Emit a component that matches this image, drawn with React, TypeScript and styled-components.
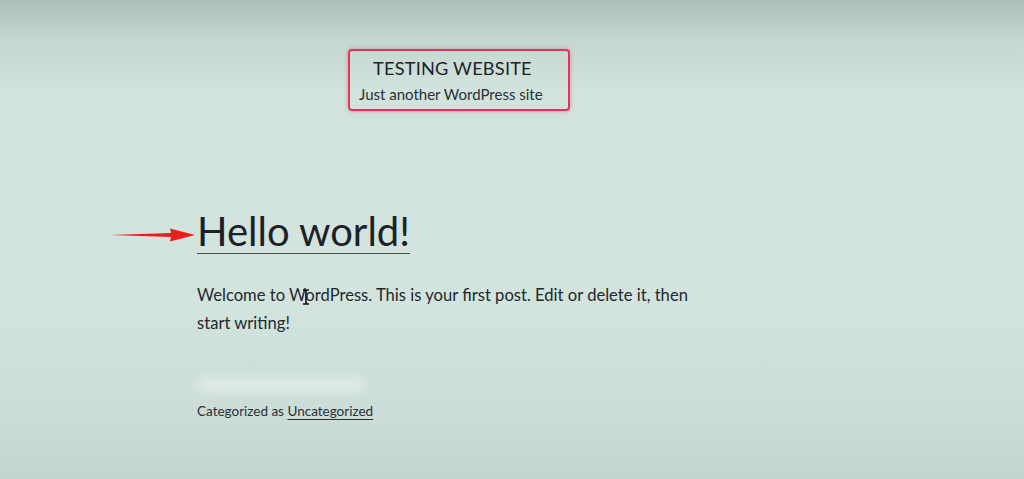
import styled, { createGlobalStyle } from "styled-components";

const GlobalStyle = createGlobalStyle`
  html, body {
    margin: 0;
    padding: 0;
  }
  body {
    font-family: Lato, "Noto Sans", sans-serif;
    color: #28303d;
  }
`;

const Page = styled.div`
  position: relative;
  width: 1024px;
  height: 479px;
  overflow: hidden;
  background: linear-gradient(
    180deg,
    #acbfb7 0px,
    #c4d7d0 40px,
    #d1e3dc 90px,
    #d2e4dd 300px,
    #cbddd6 420px,
    #c2d4cc 479px
  );
  display: flex;
  flex-direction: column;
`;

const Header = styled.header`
  padding: 49px 0 0 348px;
`;

const Branding = styled.div`
  width: 209px;
  height: 58px;
  border: 2px solid #e5335f;
  border-radius: 4px;
  box-shadow: 0 0 4px rgba(229, 51, 95, 0.45);
  display: flex;
  flex-direction: column;
  padding-left: 9px;
  box-sizing: content-box;
`;

const SiteTitle = styled.div`
  margin: 5px 0 0 14px;
  font-size: 18.2px;
  line-height: 24px;
  letter-spacing: 0.2px;
  color: #1d2228;
`;

const Tagline = styled.div`
  margin-top: 5px;
  font-size: 15px;
  line-height: 18px;
  color: #2a3037;
`;

const Entry = styled.article`
  padding: 96px 0 0 197px;
  display: flex;
  flex-direction: column;
  align-items: flex-start;
`;

const TitleRow = styled.div`
  position: relative;
`;

const Pointer = styled.svg`
  position: absolute;
  left: -88px;
  top: 19px;
`;

const EntryTitle = styled.h1`
  margin: 0;
  font-size: 40px;
  line-height: 48px;
  font-weight: 400;
  color: #1c2127;
  text-decoration: underline;
  text-decoration-thickness: 1px;
  text-underline-offset: 7px;
  text-decoration-color: #4a5058;
`;

const Content = styled.p`
  margin: 26px 0 0;
  width: 510px;
  font-size: 16.6px;
  line-height: 28px;
  color: #22282f;
`;

const Meta = styled.div`
  margin-top: 41px;
  display: flex;
  flex-direction: column;
  gap: 10px;
  font-size: 13.5px;
  line-height: 18px;
  color: #2a3037;
`;

const Blurred = styled.span`
  display: inline-block;
  width: 168px;
  height: 14px;
  border-radius: 7px;
  background: #e6eeeb;
  filter: blur(4px);
  opacity: 0.8;
`;

const TermLink = styled.a`
  color: inherit;
  text-decoration: underline;
  text-underline-offset: 3px;
`;

const Cursor = styled.svg`
  position: absolute;
  left: 301px;
  top: 289px;
`;

export default function App() {
  return (
    <>
      <GlobalStyle />
      <Page>
        <Header>
          <Branding>
            <SiteTitle>TESTING WEBSITE</SiteTitle>
            <Tagline>Just another WordPress site</Tagline>
          </Branding>
        </Header>

        <Entry>
          <TitleRow>
            <Pointer width="88" height="18" viewBox="0 0 88 18">
              <path d="M1 9 L62 7 L61 2.5 L86 9 L61 15.5 L62 11 Z" fill="#ee1c1c" />
            </Pointer>
            <EntryTitle>Hello world!</EntryTitle>
          </TitleRow>

          <Content>
            Welcome to WordPress. This is your first post. Edit or delete it, then start
            writing!
          </Content>

          <Meta>
            <Blurred />
            <span>
              Categorized as <TermLink href="#">Uncategorized</TermLink>
            </span>
          </Meta>
        </Entry>

        {/* text caret */}
        <Cursor width="10" height="16" viewBox="0 0 10 16">
          <path
            d="M2 1 H4 Q5 1 5 2.5 Q5 1 6 1 H8 M5 2.5 V13.5 M2 15 H4 Q5 15 5 13.5 Q5 15 6 15 H8"
            stroke="#111"
            strokeWidth="1.6"
            fill="none"
          />
        </Cursor>
      </Page>
    </>
  );
}
